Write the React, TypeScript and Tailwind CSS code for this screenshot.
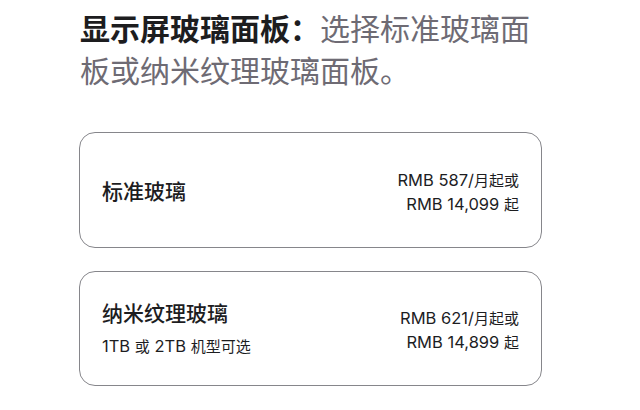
import React from "react";

const cjk = { fontFamily: '"Noto Sans CJK SC", "Noto Sans", sans-serif' };
const latin = { fontFamily: 'Inter, "Noto Sans CJK SC", sans-serif' };

function Price({ monthly, total }: { monthly: string; total: string }) {
  return (
    <div className="flex flex-col items-end text-[16.5px] leading-[23px] text-[#1d1d1f] pt-[3px]" style={latin}>
      <div>
        RMB {monthly}/<span style={cjk} className="text-[15px]">月起或</span>
      </div>
      <div>
        RMB {total} <span style={cjk} className="text-[15px]">起</span>
      </div>
    </div>
  );
}

export default function App() {
  return (
    <div className="w-[640px] h-[410px] bg-white overflow-hidden" style={cjk}>
      <div className="ml-[79px] w-[463px] pt-[6px]">
        <h1 className="text-[30px] leading-[42px] pl-[1px]">
          <span className="font-bold text-[#1d1d1f]">显示屏玻璃面板：</span>
          <span className="font-normal text-[#6e6b74]">选择标准玻璃面板或纳米纹理玻璃面板。</span>
        </h1>
        <div className="mt-[42px] flex flex-col gap-[23px]">
          <div className="h-[116px] rounded-[16px] border border-[#86868b] flex items-center justify-between pl-[22px] pr-[22px]">
            <div className="text-[21px] font-medium text-[#1d1d1f] leading-[28px]">标准玻璃</div>
            <Price monthly="587" total="14,099" />
          </div>
          <div className="h-[115px] rounded-[16px] border border-[#86868b] flex items-center justify-between pl-[22px] pr-[22px]">
            <div className="flex flex-col">
              <div className="text-[21px] font-medium text-[#1d1d1f] leading-[28px]">纳米纹理玻璃</div>
              <div className="mt-[7px] text-[16.5px] leading-[26px] text-[#1d1d1f]" style={latin}>
                1TB <span style={cjk} className="text-[15px]">或</span> 2TB <span style={cjk} className="text-[15px]">机型可选</span>
              </div>
            </div>
            <Price monthly="621" total="14,899" />
          </div>
        </div>
      </div>
    </div>
  );
}
